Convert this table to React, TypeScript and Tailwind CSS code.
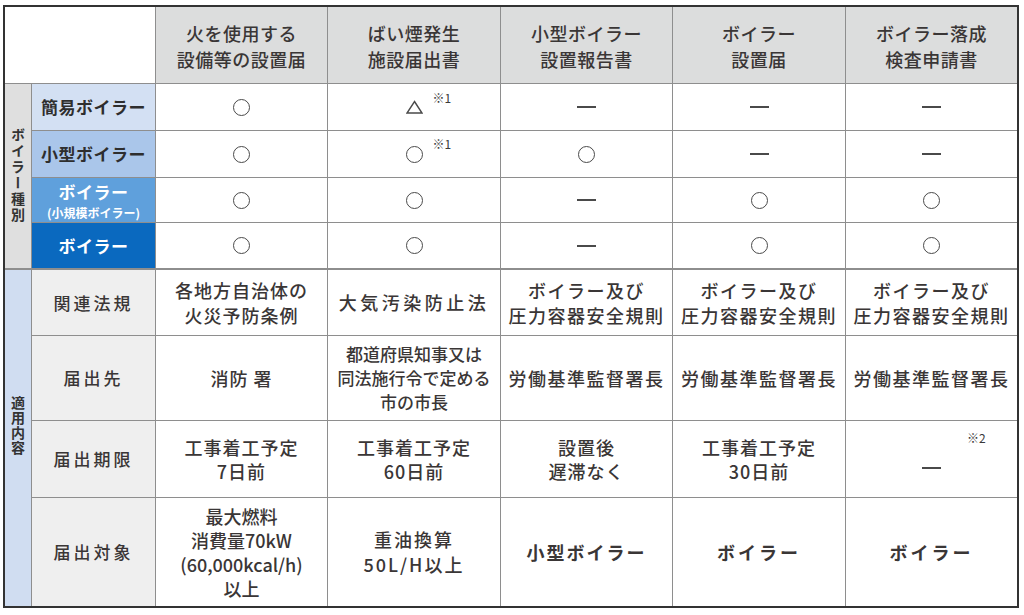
import React from 'react';

const Circle = () => (
  <span className="inline-block w-[17px] h-[17px] rounded-full border-[1.5px] border-[#4a4a4a]" />
);

const Dash = () => <span className="inline-block w-[19px] h-[2px] bg-[#4a4a4a]" />;

const Triangle = () => (
  <svg width="17" height="14" viewBox="0 0 17 14" className="inline-block">
    <polygon points="8.5,1.5 16,13 1,13" fill="none" stroke="#4a4a4a" strokeWidth="1.4" />
  </svg>
);

const Note: React.FC<{ mark: string; children: React.ReactNode }> = ({ mark, children }) => (
  <span className="relative inline-flex items-center">
    {children}
    <span className="absolute left-[27px] -top-[8px] text-[12px] leading-none whitespace-nowrap text-[#3a3a3a]">
      {mark}
    </span>
  </span>
);

const headers = [
  ['火を使用する', '設備等の設置届'],
  ['ばい煙発生', '施設届出書'],
  ['小型ボイラー', '設置報告書'],
  ['ボイラー', '設置届'],
  ['ボイラー落成', '検査申請書'],
];

type Mark = 'o' | 'tri' | '-' | 'o1' | 'tri1';

const boilerRows: { label: React.ReactNode; bg: string; marks: Mark[] }[] = [
  {
    label: <span className="text-[#2e2e2e]">簡易ボイラー</span>,
    bg: 'bg-[#d3e0f3]',
    marks: ['o', 'tri1', '-', '-', '-'],
  },
  {
    label: <span className="text-[#2e2e2e]">小型ボイラー</span>,
    bg: 'bg-[#aac6ea]',
    marks: ['o', 'o1', 'o', '-', '-'],
  },
  {
    label: (
      <span className="flex flex-col items-center text-white">
        <span className="leading-[25px]">ボイラー</span>
        <span className="text-[12px] leading-[17px] tracking-[0px]">(小規模ボイラー)</span>
      </span>
    ),
    bg: 'bg-[#5fa0dc]',
    marks: ['o', 'o', '-', 'o', 'o'],
  },
  {
    label: <span className="text-white">ボイラー</span>,
    bg: 'bg-[#0a69bf]',
    marks: ['o', 'o', '-', 'o', 'o'],
  },
];

const renderMark = (m: Mark) => {
  if (m === 'o') return <Circle />;
  if (m === 'tri') return <Triangle />;
  if (m === '-') return <Dash />;
  if (m === 'o1') return <Note mark="※1"><Circle /></Note>;
  return <Note mark="※1"><Triangle /></Note>;
};

const Lines: React.FC<{ lines: string[]; className?: string }> = ({ lines, className }) => (
  <div className={`flex flex-col items-center ${className ?? ''}`}>
    {lines.map((l, i) => (
      <span key={i} className="whitespace-nowrap">{l}</span>
    ))}
  </div>
);

const App: React.FC = () => {
  const cell = 'bg-white flex items-center justify-center text-center';
  const lower = 'border-t border-[#8e8e8e]';

  return (
    <div
      className="w-[1024px] h-[615px] bg-white pt-[5px] pl-[3px] text-[#3a3636]"
      style={{ fontFamily: '"Noto Sans CJK JP", "Noto Sans", sans-serif' }}
    >
      <div className="w-[1016px] grid gap-px bg-[#8e8e8e] border-2 border-[#333] grid-cols-[26px_123px_171px_172px_171px_172px_171px] grid-rows-[76px_46px_46px_44px_45px_66px_84px_76px_108px]">
        {/* header */}
        <div className="col-span-2 bg-white" />
        {headers.map((h, i) => (
          <div key={i} className="bg-[#dcdddd] flex items-center justify-center">
            <Lines lines={h} className="text-[18px] leading-[26px] font-medium tracking-[0.5px] pt-[2px]" />
          </div>
        ))}

        {/* boiler type group */}
        <div className="row-span-4 bg-[#dfdfdf] flex items-center justify-center">
          <span className="[writing-mode:vertical-rl] text-[14px] font-bold tracking-[2px] leading-none text-[#333]">
            ボイラー種別
          </span>
        </div>
        {boilerRows.map((r, ri) => (
          <React.Fragment key={ri}>
            <div className={`${r.bg} flex items-center justify-center text-[17px] font-bold tracking-[0.5px]`}>
              {r.label}
            </div>
            {r.marks.map((m, mi) => (
              <div key={mi} className={cell}>{renderMark(m)}</div>
            ))}
          </React.Fragment>
        ))}

        {/* applicable content group */}
        <div className={`row-span-4 bg-[#d0ddf1] flex items-center justify-center pb-[24px] ${lower}`}>
          <span className="[writing-mode:vertical-rl] text-[14px] font-bold tracking-[1px] leading-none text-[#333]">
            適用内容
          </span>
        </div>

        {/* 関連法規 */}
        <div className={`bg-[#efefef] flex items-center justify-center text-[17px] font-medium tracking-[3px] ${lower}`}>関連法規</div>
        <div className={`${cell} ${lower}`}>
          <Lines lines={['各地方自治体の', '火災予防条例']} className="text-[18px] leading-[25px] font-medium tracking-[1px]" />
        </div>
        <div className={`${cell} ${lower}`}>
          <span className="text-[18px] font-medium tracking-[3.5px] whitespace-nowrap">大気汚染防止法</span>
        </div>
        {[0, 1, 2].map((i) => (
          <div key={i} className={`${cell} ${lower}`}>
            <Lines lines={['ボイラー及び', '圧力容器安全規則']} className="text-[18px] leading-[25px] font-medium tracking-[1.5px]" />
          </div>
        ))}

        {/* 届出先 */}
        <div className="bg-[#efefef] flex items-center justify-center text-[17px] font-medium tracking-[3px]">届出先</div>
        <div className={cell}>
          <span className="text-[18px] font-medium tracking-[1px] whitespace-nowrap">消防&nbsp;署</span>
        </div>
        <div className={cell}>
          <Lines lines={['都道府県知事又は', '同法施行令で定める', '市の市長']} className="text-[17px] leading-[24px] font-medium" />
        </div>
        {[0, 1, 2].map((i) => (
          <div key={i} className={cell}>
            <span className="text-[18px] font-medium tracking-[1.5px] whitespace-nowrap">労働基準監督署長</span>
          </div>
        ))}

        {/* 届出期限 */}
        <div className="bg-[#efefef] flex items-center justify-center text-[17px] font-medium tracking-[3px]">届出期限</div>
        <div className={cell}>
          <Lines lines={['工事着工予定', '7日前']} className="text-[18px] leading-[24px] font-medium tracking-[1px]" />
        </div>
        <div className={cell}>
          <Lines lines={['工事着工予定', '60日前']} className="text-[18px] leading-[24px] font-medium tracking-[1px]" />
        </div>
        <div className={cell}>
          <Lines lines={['設置後', '遅滞なく']} className="text-[18px] leading-[24px] font-medium tracking-[1px]" />
        </div>
        <div className={cell}>
          <Lines lines={['工事着工予定', '30日前']} className="text-[18px] leading-[24px] font-medium tracking-[1px]" />
        </div>
        <div className={`${cell} relative`}>
          <span className="mt-[6px]"><Dash /></span>
          <span className="absolute top-[11px] left-[121px] text-[12px] leading-none text-[#3a3a3a]">※2</span>
        </div>

        {/* 届出対象 */}
        <div className="bg-[#efefef] flex items-center justify-center text-[17px] font-medium tracking-[3px]">届出対象</div>
        <div className={cell}>
          <Lines
            lines={['最大燃料', '消費量70kW', '(60,000kcal/h)', '以上']}
            className="text-[18px] leading-[24px] font-medium"
          />
        </div>
        <div className={cell}>
          <Lines lines={['重油換算', '50L/H以上']} className="text-[18px] leading-[25px] font-medium tracking-[2px]" />
        </div>
        <div className={cell}>
          <span className="text-[18px] font-bold tracking-[2px] whitespace-nowrap">小型ボイラー</span>
        </div>
        <div className={cell}>
          <span className="text-[18px] font-bold tracking-[3px] whitespace-nowrap">ボイラー</span>
        </div>
        <div className={cell}>
          <span className="text-[18px] font-bold tracking-[3px] whitespace-nowrap">ボイラー</span>
        </div>
      </div>
    </div>
  );
};

export default App;
